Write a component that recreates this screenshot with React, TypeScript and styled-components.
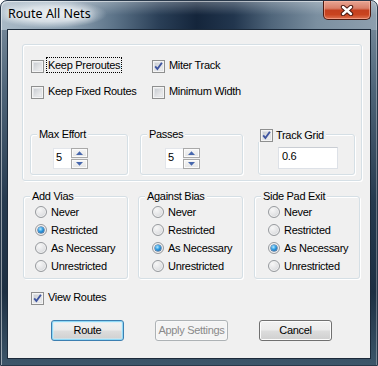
import React from 'react';
import styled, { createGlobalStyle } from 'styled-components';

const Global = createGlobalStyle`
  html, body { margin: 0; padding: 0; background: #ffffff; }
  body { width: 378px; height: 366px; overflow: hidden; }
  #root { width: 378px; height: 366px; }
`;

const Window = styled.div`
  width: 378px;
  height: 366px;
  box-sizing: border-box;
  display: flex;
  flex-direction: column;
  padding: 0 6px 6px 6px;
  border: 1px solid #28384a;
  border-radius: 7px 7px 0 0;
  overflow: hidden;
  background:
    linear-gradient(to bottom, rgba(255,255,255,0.28), rgba(255,255,255,0) 14px) top left / 100% 29px no-repeat,
    linear-gradient(to right, #a9b9c6 0%, #8da1b2 18%, #5d7489 30%, #2a3f57 42%, #14253b 52%, #22364e 62%, #50667b 72%, #7b8fa0 84%, #8e9fae 100%) top left / 100% 29px no-repeat,
    linear-gradient(to bottom, #8193a3 0%, #4e6478 25%, #263a4f 55%, #1d2f42 80%, #3d566a 100%);
  box-shadow: inset 1px 1px 0 rgba(255,255,255,0.5), inset -1px 0 0 rgba(255,255,255,0.3);
`;

const TitleBar = styled.div`
  height: 28px;
  flex: none;
  display: flex;
  align-items: flex-start;
  justify-content: space-between;
`;

const Caption = styled.span`
  font-family: "Noto Sans", "Open Sans", sans-serif;
  font-size: 12.5px;
  line-height: 16px;
  color: #000;
  margin: -1px 0 0 -13px;
  padding: 6px 16px 6px 14px;
  background: radial-gradient(closest-side, rgba(235,240,244,0.95) 0%, rgba(225,232,238,0.8) 55%, rgba(220,228,235,0) 100%);
  text-shadow: 0 0 6px rgba(255,255,255,0.9), 0 0 10px rgba(255,255,255,0.8);
`;

const CloseButton = styled.div`
  width: 48px;
  height: 19px;
  box-sizing: border-box;
  border: 1px solid #4e1a10;
  border-top: none;
  border-radius: 0 0 5px 5px;
  background: linear-gradient(to bottom, #e7a593 0%, #d9806a 40%, #c4401f 52%, #c9441f 75%, #dd7252 100%);
  box-shadow: inset 0 0 0 1px rgba(255,190,170,0.55);
  display: flex;
  align-items: center;
  justify-content: center;
`;

const Client = styled.div`
  flex: 1;
  display: flex;
  flex-direction: column;
  align-items: flex-start;
  border: 1px solid #1c2a3a;
  background: #f0f0f0;
  font-family: "Liberation Sans", Arial, sans-serif;
  font-size: 11px;
  letter-spacing: -0.3px;
  color: #000;
`;

const OptionsGroup = styled.div`
  margin: 14px 0 0 14px;
  width: 340px;
  height: 137px;
  box-sizing: border-box;
  padding: 12px 0 0 8px;
  border: 1px solid #d5dfe5;
  border-radius: 3px;
  box-shadow: inset 1px 1px 0 #fff, 1px 1px 0 #fff;
  display: flex;
  flex-direction: column;
`;

const CheckGrid = styled.div`
  display: grid;
  grid-template-columns: 121px auto;
  grid-auto-rows: 16px;
  row-gap: 10px;
`;

const CheckItem = styled.div<{ $mt?: number; $ml?: number }>`
  display: flex;
  align-items: flex-start;
  height: 16px;
  margin-top: ${(p) => p.$mt ?? 0}px;
  margin-left: ${(p) => p.$ml ?? 0}px;
`;

const BoxOuter = styled.span<{ $mt?: number }>`
  width: 13px;
  height: 13px;
  flex: none;
  box-sizing: border-box;
  margin-top: ${(p) => p.$mt ?? 3}px;
  border: 1px solid #8e8f8f;
  background: linear-gradient(135deg, #bfc4cb 0%, #dadcdf 45%, #eeeeef 80%, #f6f6f6 100%);
  box-shadow: inset 0 0 0 1px #f4f4f4, inset 0 0 0 2px #e2e4e7;
  display: flex;
  align-items: center;
  justify-content: center;
`;

const CheckLabel = styled.span<{ $focus?: boolean }>`
  height: 16px;
  box-sizing: border-box;
  line-height: 15px;
  padding: 0 1px;
  margin-left: 2px;
  border: 1px dotted ${(p) => (p.$focus ? '#000' : 'transparent')};
  white-space: nowrap;
`;

const SubRow = styled.div`
  display: flex;
  margin: 35px 0 0 -1px;
`;

const GroupBox = styled.div<{ $w: number; $h: number; $ml?: number }>`
  width: ${(p) => p.$w}px;
  height: ${(p) => p.$h}px;
  margin-left: ${(p) => p.$ml ?? 0}px;
  box-sizing: border-box;
  border: 1px solid #d5dfe5;
  border-radius: 3px;
  box-shadow: inset 1px 1px 0 #fff, 1px 1px 0 #fff;
  display: flex;
  flex-direction: column;
  align-items: flex-start;
`;

const GroupTitle = styled.div<{ $mt?: number; $ml?: number }>`
  display: flex;
  align-items: center;
  height: 13px;
  line-height: 13px;
  margin: ${(p) => p.$mt ?? -7}px 0 0 ${(p) => p.$ml ?? 6}px;
  padding: 0 2px;
  background: #f0f0f0;
  white-space: nowrap;
`;

const TitleCheckText = styled.span`
  margin-left: 3px;
`;

const SpinWrap = styled.div<{ $ml: number }>`
  display: flex;
  margin: 7px 0 0 ${(p) => p.$ml}px;
  height: 21px;
`;

const SpinEdit = styled.div`
  width: 18px;
  height: 21px;
  box-sizing: border-box;
  background: #fff;
  border: 1px solid #e2e5ea;
  border-right: none;
  padding: 2px 0 0 2px;
  line-height: 13px;
`;

const SpinButtons = styled.div`
  display: flex;
  flex-direction: column;
  gap: 1px;
`;

const SpinBtn = styled.div`
  width: 17px;
  height: 10px;
  box-sizing: border-box;
  border: 1px solid #a9a9a9;
  background: linear-gradient(to bottom, #f6f6f6, #e4e4e4);
  box-shadow: inset 0 0 0 1px #fbfbfb;
  display: flex;
  align-items: center;
  justify-content: center;
`;

const TextBox = styled.div`
  width: 60px;
  height: 22px;
  box-sizing: border-box;
  margin: 5px 0 0 19px;
  background: #fff;
  border: 1px solid #dde1e7;
  border-top-color: #c9cdd3;
  padding: 2px 0 0 3px;
  line-height: 13px;
`;

const RadioRow = styled.div`
  display: flex;
  margin: 15px 0 0 15px;
`;

const RadioList = styled.div<{ $inset: number }>`
  display: flex;
  flex-direction: column;
  padding-left: ${(p) => p.$inset}px;
`;

const RadioItem = styled.div`
  display: flex;
  align-items: center;
  height: 18px;
`;

const RadioCircle = styled.span`
  width: 12px;
  height: 12px;
  box-sizing: border-box;
  flex: none;
  border-radius: 50%;
  border: 1px solid #979a9e;
  background: radial-gradient(circle at 35% 30%, #f7f7f7 0%, #e2e3e5 55%, #c9ccd0 100%);
  box-shadow: inset 0 0 0 1px #f2f2f2;
  display: flex;
  align-items: center;
  justify-content: center;
`;

const RadioDot = styled.span`
  width: 6px;
  height: 6px;
  border-radius: 50%;
  background: radial-gradient(circle at 40% 35%, #b6eaff 0%, #2f9be0 45%, #0b4f96 100%);
  box-shadow: 0 0 0 0.5px #1b4f88;
`;

const RadioText = styled.span`
  margin-left: 4px;
  line-height: 18px;
  white-space: nowrap;
`;

const ButtonRow = styled.div`
  display: flex;
  gap: 31px;
  margin: 15px 0 0 43px;
`;

const Button = styled.div<{ $default?: boolean; $disabled?: boolean }>`
  width: 73px;
  height: 21px;
  box-sizing: border-box;
  border-radius: 3px;
  border: 1px solid ${(p) => (p.$disabled ? '#adb2b5' : p.$default ? '#3c7fb1' : '#707070')};
  background: ${(p) =>
    p.$disabled
      ? '#f4f4f4'
      : 'linear-gradient(to bottom, #f2f2f2 0%, #ebebeb 48%, #dddddd 52%, #cfcfcf 100%)'};
  box-shadow: ${(p) =>
    p.$disabled
      ? 'inset 0 0 0 1px #f8f8f8'
      : p.$default
      ? 'inset 0 0 0 1px #8fd8f6, inset 0 0 0 2px rgba(200,238,252,0.5)'
      : 'inset 0 0 0 1px #fcfcfc'};
  color: ${(p) => (p.$disabled ? '#8a8a8a' : '#000')};
  text-align: center;
  line-height: 19px;
  white-space: nowrap;
`;

const CheckMark = () => (
  <svg width="9" height="9" viewBox="0 0 9 9">
    <path d="M1.2 4.4 L3.4 7 L7.9 0.8" fill="none" stroke="#3f55a0" strokeWidth="1.9" strokeLinejoin="miter" />
  </svg>
);

const Box = ({ checked, mt }: { checked?: boolean; mt?: number }) => (
  <BoxOuter $mt={mt}>{checked && <CheckMark />}</BoxOuter>
);

const Check = ({
  label,
  checked,
  focused,
  mt,
  ml,
}: {
  label: string;
  checked?: boolean;
  focused?: boolean;
  mt?: number;
  ml?: number;
}) => (
  <CheckItem $mt={mt} $ml={ml}>
    <Box checked={checked} />
    <CheckLabel $focus={focused}>{label}</CheckLabel>
  </CheckItem>
);

const Arrow = ({ up }: { up?: boolean }) => (
  <svg width="7" height="4" viewBox="0 0 7 4">
    <path d={up ? 'M0 4 L3.5 0.2 L7 4 Z' : 'M0 0 L3.5 3.8 L7 0 Z'} fill="#4767ad" />
  </svg>
);

const Spinner = ({ value, ml }: { value: string; ml: number }) => (
  <SpinWrap $ml={ml}>
    <SpinEdit>{value}</SpinEdit>
    <SpinButtons>
      <SpinBtn>
        <Arrow up />
      </SpinBtn>
      <SpinBtn>
        <Arrow />
      </SpinBtn>
    </SpinButtons>
  </SpinWrap>
);

const RadioGroup = ({
  title,
  selected,
  w,
  ml,
  inset,
}: {
  title: string;
  selected: number;
  w: number;
  ml?: number;
  inset: number;
}) => (
  <GroupBox $w={w} $h={83} $ml={ml}>
    <GroupTitle>{title}</GroupTitle>
    <RadioList $inset={inset}>
      {['Never', 'Restricted', 'As Necessary', 'Unrestricted'].map((opt, i) => (
        <RadioItem key={opt}>
          <RadioCircle>{i === selected && <RadioDot />}</RadioCircle>
          <RadioText>{opt}</RadioText>
        </RadioItem>
      ))}
    </RadioList>
  </GroupBox>
);

const CloseGlyph = () => (
  <svg width="14" height="11" viewBox="0 0 14 11">
    <path d="M3 2 L11 9 M11 2 L3 9" stroke="#4a1a12" strokeWidth="4.4" strokeLinecap="round" fill="none" />
    <path d="M3 2 L11 9 M11 2 L3 9" stroke="#ffffff" strokeWidth="2.4" strokeLinecap="round" fill="none" />
  </svg>
);

export default function App() {
  return (
    <>
      <Global />
      <Window>
        <TitleBar>
          <Caption>Route All Nets</Caption>
          <CloseButton aria-label="Close">
            <CloseGlyph />
          </CloseButton>
        </TitleBar>
        <Client>
          <OptionsGroup>
            <CheckGrid>
              <Check label="Keep Preroutes" focused />
              <Check label="Miter Track" checked />
              <Check label="Keep Fixed Routes" />
              <Check label="Minimum Width" />
            </CheckGrid>
            <SubRow>
              <GroupBox $w={98} $h={41}>
                <GroupTitle>Max Effort</GroupTitle>
                <Spinner value="5" ml={22} />
              </GroupBox>
              <GroupBox $w={103} $h={41} $ml={12}>
                <GroupTitle>Passes</GroupTitle>
                <Spinner value="5" ml={24} />
              </GroupBox>
              <GroupBox $w={97} $h={41} $ml={15}>
                <GroupTitle $ml={-1} $mt={-6}>
                  <Box checked mt={0} />
                  <TitleCheckText>Track Grid</TitleCheckText>
                </GroupTitle>
                <TextBox>0.6</TextBox>
              </GroupBox>
            </SubRow>
          </OptionsGroup>
          <RadioRow>
            <RadioGroup title="Add Vias" selected={1} w={105} inset={11} />
            <RadioGroup title="Against Bias" selected={2} w={105} ml={10} inset={13} />
            <RadioGroup title="Side Pad Exit" selected={2} w={106} ml={11} inset={13} />
          </RadioRow>
          <Check label="View Routes" checked mt={10} ml={23} />
          <ButtonRow>
            <Button $default>Route</Button>
            <Button $disabled>Apply Settings</Button>
            <Button>Cancel</Button>
          </ButtonRow>
        </Client>
      </Window>
    </>
  );
}
